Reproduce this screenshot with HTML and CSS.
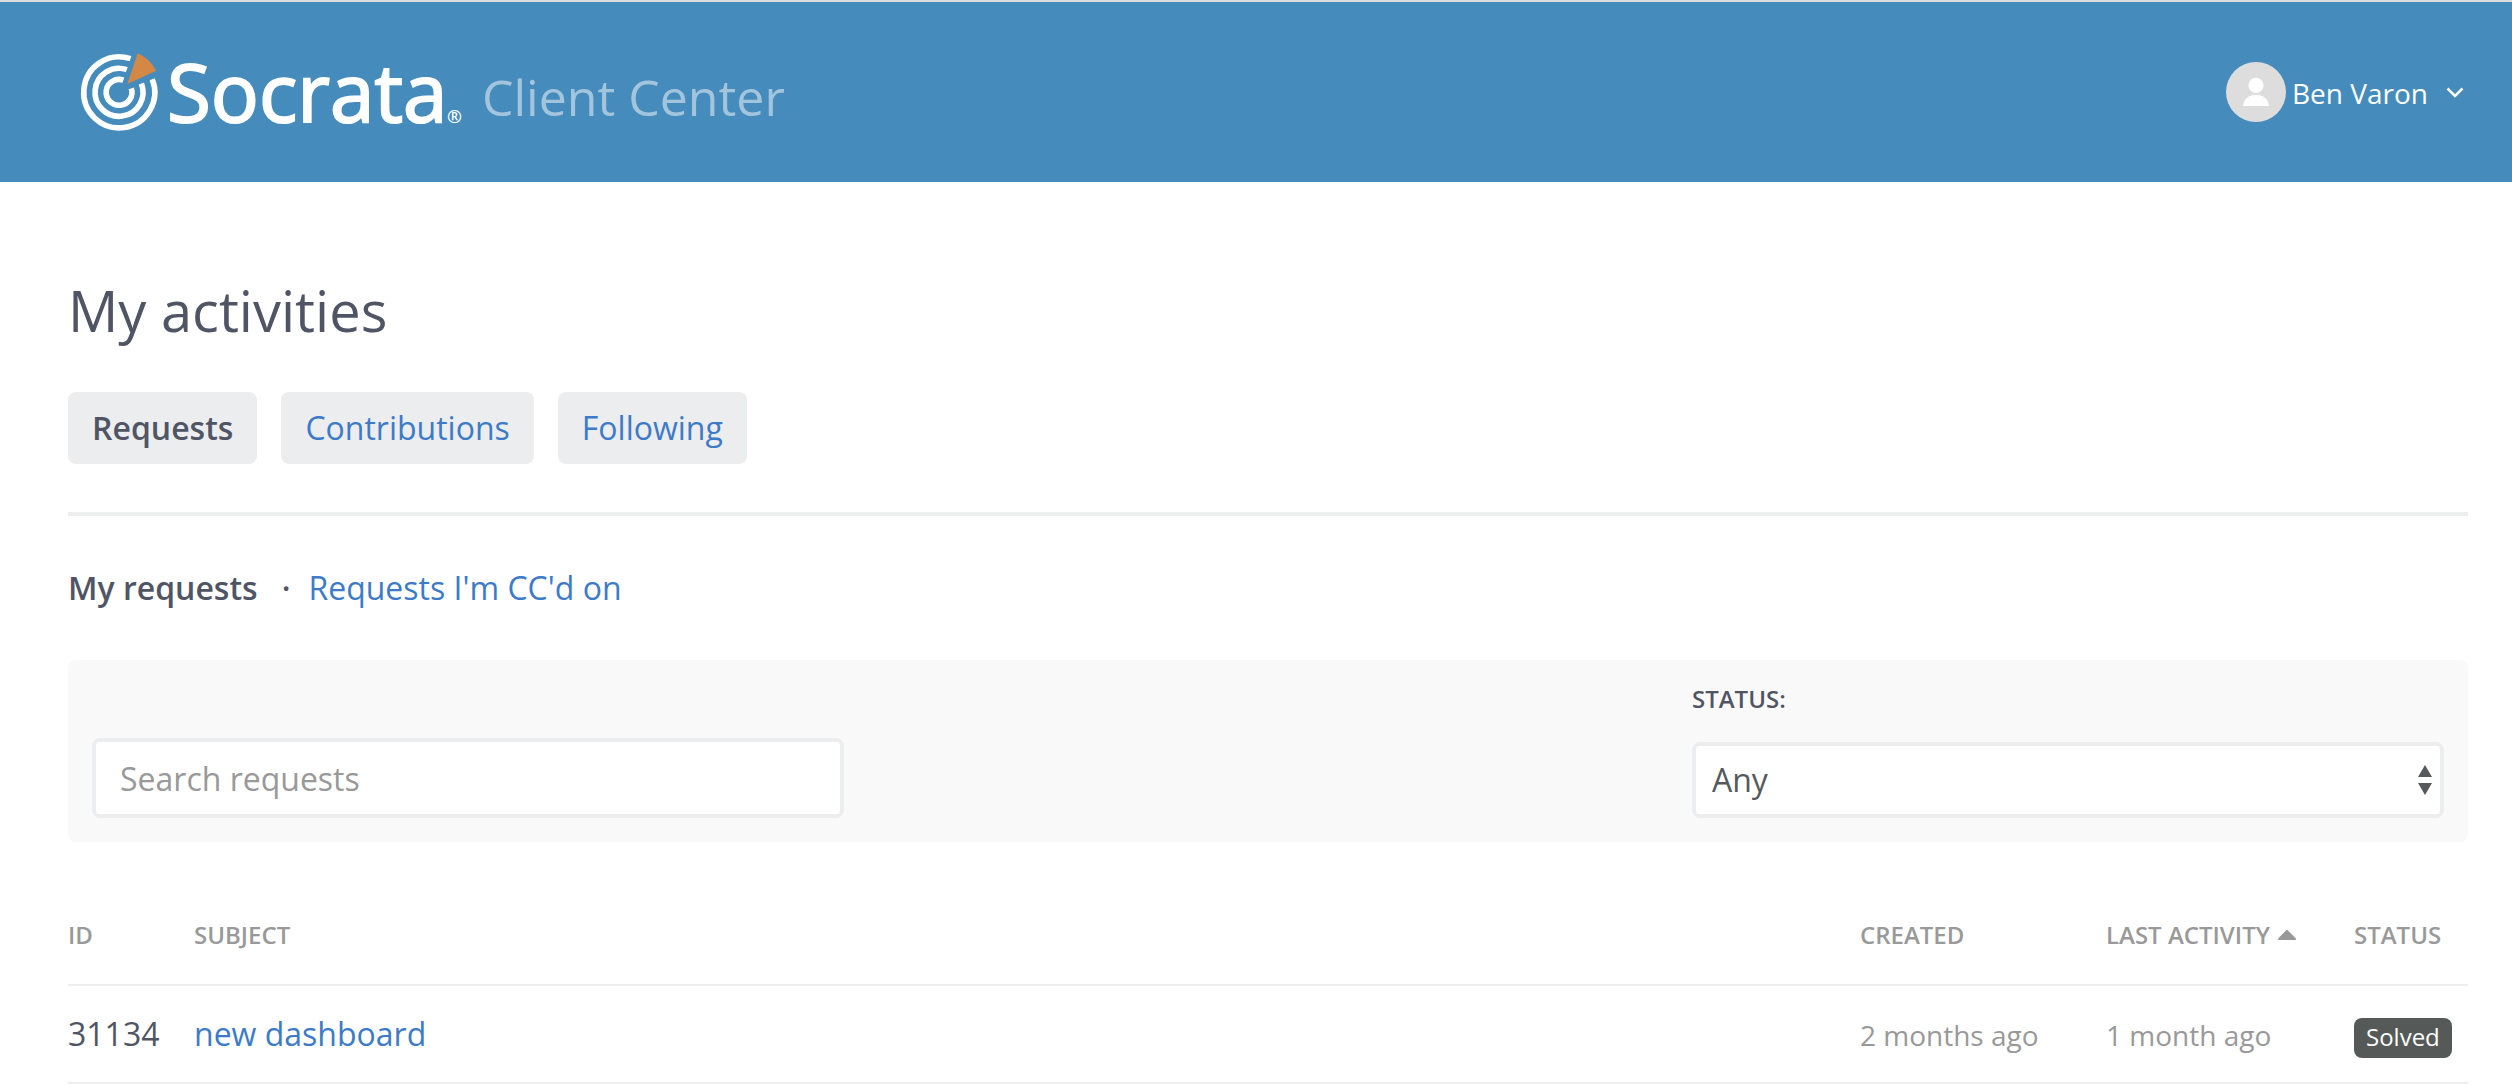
FILE: index.html
```html
<!DOCTYPE html>
<html lang="en">
<head>
  <meta charset="UTF-8">
  <meta name="viewport" content="width=device-width, initial-scale=1.0">
  <title>My activities</title>
  <link rel="stylesheet" href="styles.css">
</head>
<body>
  <header class="header">
    <a class="logo" href="#">
      <svg class="logo-image" viewBox="0 0 384 80" role="img" aria-label="Socrata">
        <g fill="none" stroke="#fff" stroke-width="5.6">
          <path d="M50.5 6.7A35.5 35.5 0 1 0 72.2 27.2"/>
          <path d="M46.8 17.6A24 24 0 1 0 61.4 31.6"/>
          <path d="M43.4 28.2A12.9 12.9 0 1 0 51.3 36.3"/>
        </g>
        <path fill="#d38845" d="M47.3 32L57.7 1.3A36 36 0 0 1 76 18.7Z"/>
        <text class="logo-name" x="87" y="70">Socrata</text>
        <text class="logo-mark" x="367" y="71">®</text>
      </svg>
      <span class="logo-title">Client Center</span>
    </a>
    <button class="user" type="button">
      <svg class="user-avatar" viewBox="0 0 60 60">
        <circle cx="30" cy="30" r="30" fill="#ddd"/>
        <circle cx="30" cy="23.3" r="7.6" fill="#fff"/>
        <path fill="#fff" d="M17 44C17.500 37 23 32.800 30 32.800S42.500 37 43 44Z"/>
      </svg>
      <span class="user-name">Ben Varon</span>
      <svg class="user-arrow" viewBox="0 0 18 11">
        <path d="M1.500 1.500L9 9L16.500 1.500" fill="none" stroke="#fff" stroke-width="2.500"/>
      </svg>
    </button>
  </header>

  <main class="container">
    <h1>My activities</h1>
    <nav class="tabs">
      <a class="tab tab-active" href="#">Requests</a>
      <a class="tab" href="#">Contributions</a>
      <a class="tab" href="#">Following</a>
    </nav>

    <nav class="sub-nav">
      <span class="sub-nav-active">My requests</span>
      <span class="sub-nav-dot">·</span>
      <a href="#">Requests I'm CC'd on</a>
    </nav>

    <form class="filters">
      <input class="search" type="search" placeholder="Search requests" aria-label="Search requests">
      <div class="status-filter">
        <label for="status">Status:</label>
        <div class="select-box">
          <select id="status">
            <option>Any</option>
            <option>Open</option>
            <option>Solved</option>
          </select>
          <svg class="select-arrows" viewBox="0 0 14 30">
            <path d="M7 0L14 12H0ZM7 30L14 18H0Z" fill="#55595b"/>
          </svg>
        </div>
      </div>
    </form>

    <table class="requests">
      <thead>
        <tr>
          <th class="col-id">ID</th>
          <th>Subject</th>
          <th class="col-created">Created</th>
          <th class="col-activity">
            <a class="sort" href="#">Last activity
              <svg viewBox="0 0 18 10"><path d="M1 9L9 1L17 9Z" fill="#999" stroke="#999" stroke-width="2" stroke-linejoin="round"/></svg>
            </a>
          </th>
          <th class="col-status">Status</th>
        </tr>
      </thead>
      <tbody>
        <tr>
          <td>31134</td>
          <td><a href="#">new dashboard</a></td>
          <td class="date">2 months ago</td>
          <td class="date">1 month ago</td>
          <td class="date"><span class="badge">Solved</span></td>
        </tr>
      </tbody>
    </table>
  </main>
</body>
</html>
```

FILE: styles.css
```css
* {
  box-sizing: border-box;
}
body {
  margin: 0;
  font-family: "Open Sans", "Noto Sans", sans-serif;
  font-size: 32px;
  line-height: 40px;
  color: #505565;
  background: #fff;
}
a {
  color: #3d7bc8;
  text-decoration: none;
}
a:hover {
  text-decoration: underline;
}

/* header */
.header {
  display: flex;
  align-items: center;
  justify-content: space-between;
  padding: 50px 48px 50px 80px;
  border-top: 2px solid #ddd;
  background: #458bbc;
}
.logo {
  display: flex;
  align-items: center;
  gap: 18px;
}
.logo:hover {
  text-decoration: none;
}
.logo-image {
  width: 384px;
  height: 80px;
  overflow: visible;
}
.logo-name {
  font-size: 80px;
  fill: #fff;
  stroke: #fff;
  stroke-width: 2px;
}
.logo-mark {
  font-size: 18px;
  font-weight: 600;
  fill: #fff;
}
.logo-title {
  padding-top: 10px;
  font-size: 50px;
  color: #a2c5dd;
}
.user {
  display: flex;
  align-items: center;
  padding: 0;
  border: 0;
  background: none;
  color: #fff;
  font: inherit;
  font-size: 28px;
  cursor: pointer;
}
.user-avatar {
  width: 60px;
  height: 60px;
  margin-right: 6px;
}
.user-name {
  padding-top: 2px;
}
.user-arrow {
  width: 18px;
  height: 11px;
  margin-left: 18px;
}

/* page */
.container {
  padding: 90px 44px 0 68px;
}
h1 {
  margin: 0 0 44px;
  font-size: 56px;
  font-weight: 400;
  line-height: 76px;
}
.tabs {
  display: flex;
  gap: 24px;
  padding-bottom: 48px;
  border-bottom: 4px solid #edeeee;
}
.tab {
  padding: 16px 24px;
  border-radius: 8px;
  background: #ecedef;
}
.tab-active {
  color: #505565;
  font-weight: 600;
}
.sub-nav {
  display: flex;
  margin: 52px 0;
}
.sub-nav-active {
  font-weight: 600;
}
.sub-nav-dot {
  margin: 0 18px 0 24px;
  font-weight: 600;
}

/* filters */
.filters {
  display: grid;
  grid-template-columns: repeat(3, 1fr);
  gap: 48px;
  align-items: end;
  padding: 24px;
  border-radius: 8px;
  background: #f9f9f9;
}
.search,
select {
  display: block;
  width: 100%;
  border: 4px solid #ecedef;
  border-radius: 8px;
  background: #fff;
  font: inherit;
  appearance: none;
}
.search {
  height: 80px;
  padding: 0 24px;
  color: #505565;
}
.search::placeholder {
  color: #999;
}
.status-filter {
  grid-column: 3;
}
label {
  display: block;
  margin-bottom: 28px;
  font-size: 24px;
  font-weight: 600;
  line-height: 30px;
  text-transform: uppercase;
}
.select-box {
  position: relative;
}
select {
  height: 76px;
  padding: 0 40px 0 16px;
  color: #55595b;
}
.select-arrows {
  position: absolute;
  top: 23px;
  right: 12px;
  width: 14px;
  height: 30px;
  pointer-events: none;
}

/* requests table */
.requests {
  width: 100%;
  margin-top: 76px;
  border-collapse: separate;
  border-spacing: 0;
  table-layout: fixed;
}
th,
td {
  border-bottom: 2px solid #eee;
  text-align: left;
  vertical-align: baseline;
}
th {
  padding: 0 0 32px;
  color: #999;
  font-size: 24px;
  font-weight: 600;
  line-height: 34px;
  text-transform: uppercase;
}
td {
  padding: 28px 0 24px;
}
.col-id {
  width: 126px;
}
.col-created {
  width: 246px;
}
.col-activity {
  width: 248px;
}
.col-status {
  width: 114px;
}
.sort {
  display: flex;
  align-items: center;
  gap: 8px;
  color: #999;
}
.sort svg {
  width: 18px;
  height: 10px;
}
.date {
  color: #999;
  font-size: 28px;
}
.badge {
  display: inline-block;
  padding: 0 12px 2px;
  border-radius: 8px;
  background: #555a58;
  color: #fff;
  font-size: 24px;
  line-height: 38px;
}
```
